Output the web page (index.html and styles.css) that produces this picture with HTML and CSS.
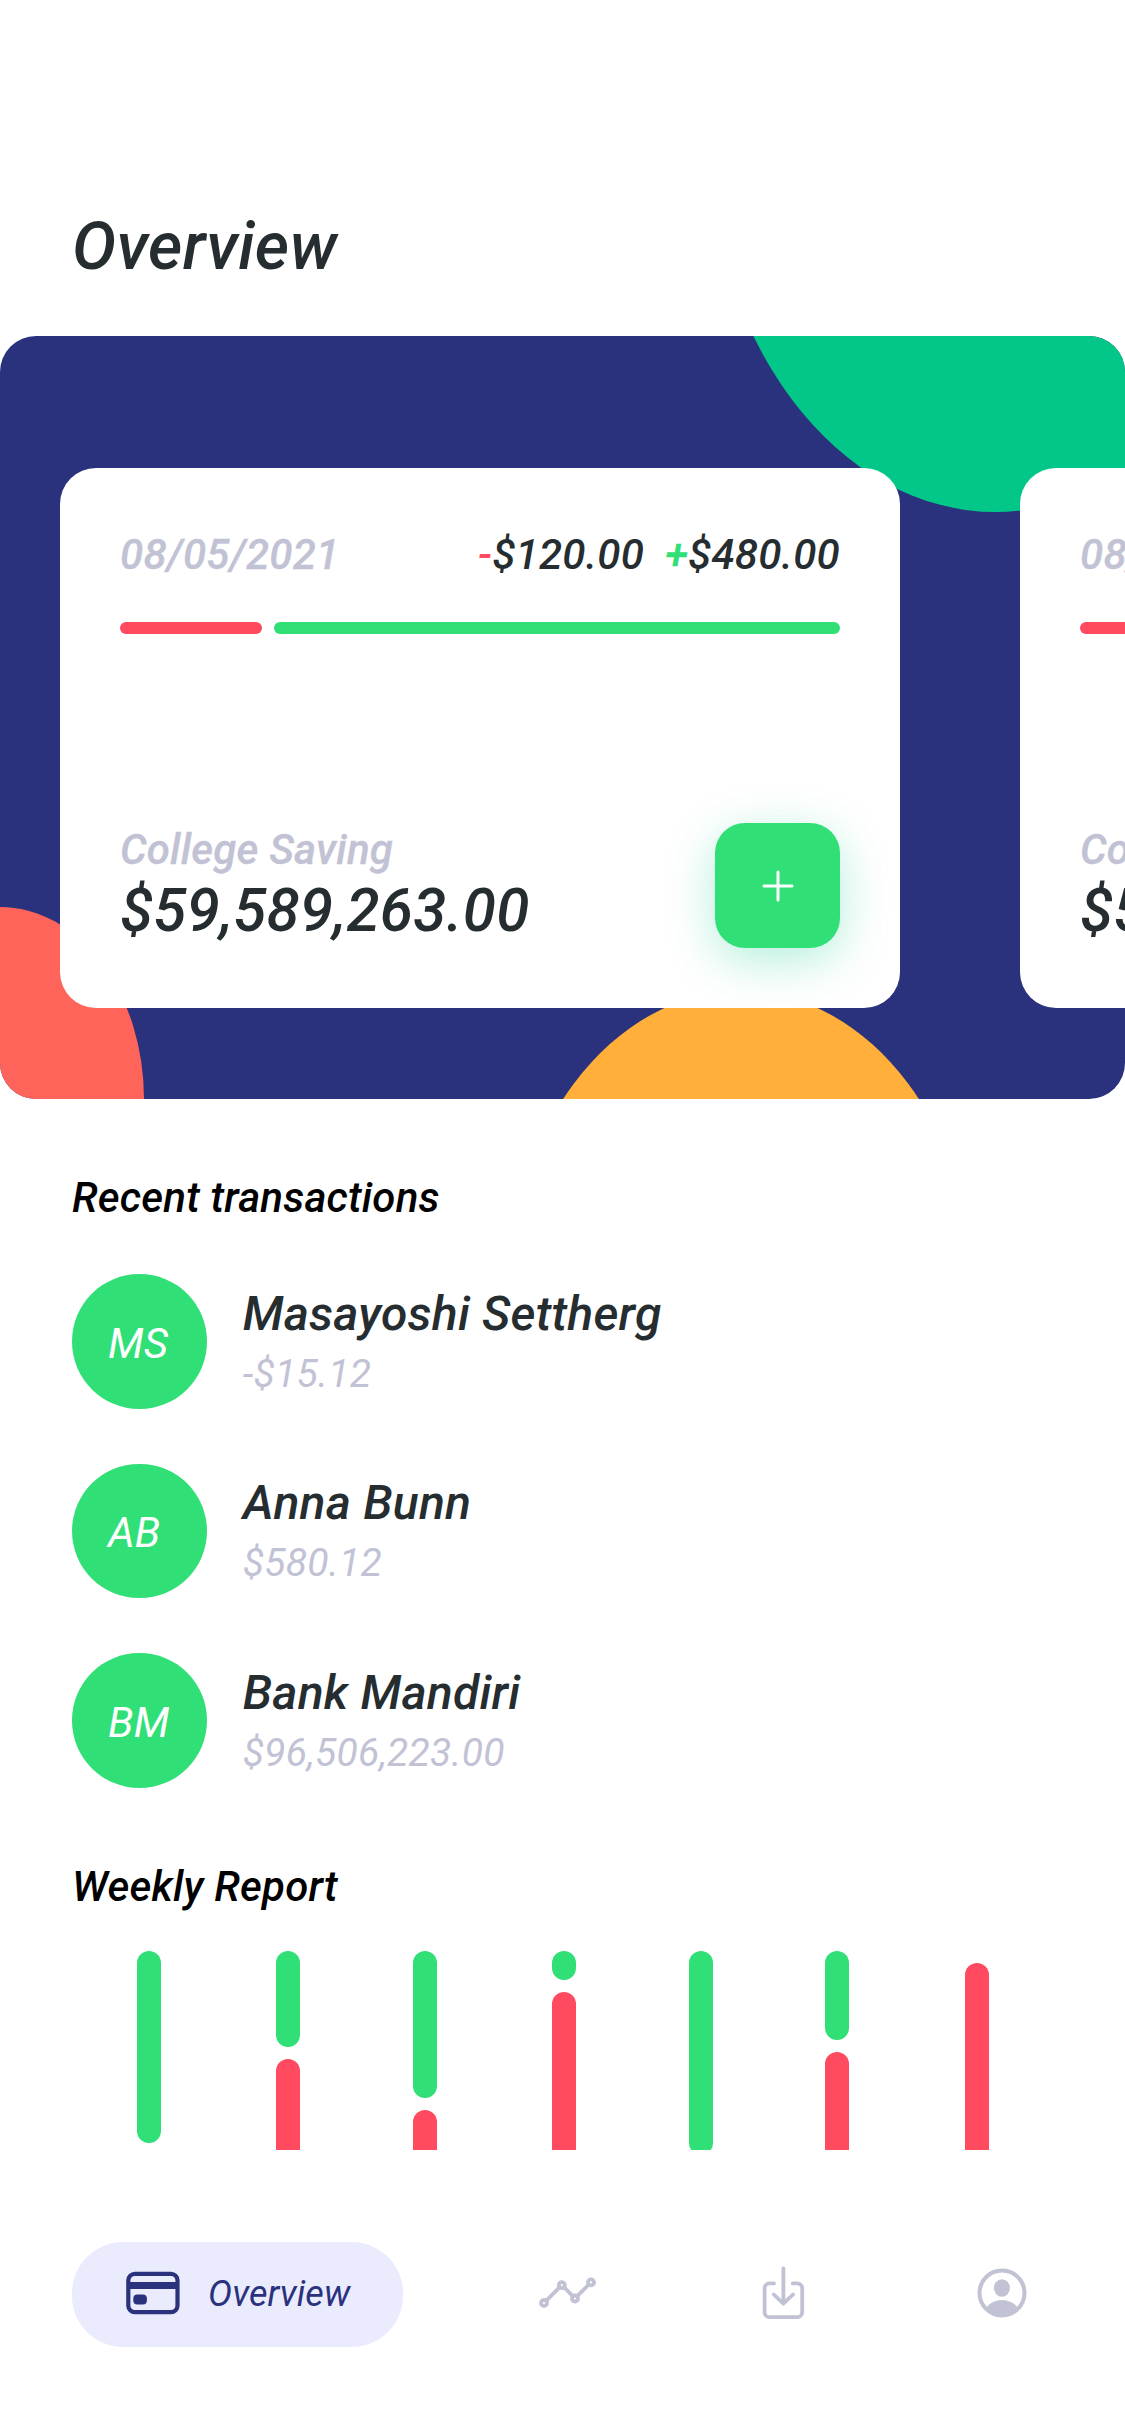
FILE: index.html
```html
<!DOCTYPE html>
<html lang="en">
<head>
<meta charset="utf-8">
<title>Overview</title>
<link rel="stylesheet" href="styles.css">
</head>
<body>
<div class="screen">
  <header class="header"><h1 class="title">Overview</h1></header>

  <section class="banner">
    <svg class="banner-art" viewBox="0 0 1125 763" aria-hidden="true">
      <ellipse cx="995.5" cy="-208" rx="288" ry="384" fill="#02c789"/>
      <ellipse cx="0" cy="763" rx="144" ry="192" fill="#ff645a"/>
      <ellipse cx="741" cy="970" rx="236" ry="315" fill="#ffaf3a"/>
    </svg>
    <div class="cards">
      <article class="card">
        <div class="card-top">
          <span class="muted label">08/05/2021</span>
          <span class="flows">
            <span class="flow"><span class="minus">-</span>$120.00</span>
            <span class="flow"><span class="plus">+</span>$480.00</span>
          </span>
        </div>
        <div class="ratio"><span class="ratio-out"></span><span class="ratio-in"></span></div>
        <div class="card-bottom">
          <div>
            <div class="muted label name">College Saving</div>
            <div class="balance">$59,589,263.00</div>
          </div>
          <button class="add" aria-label="Add">
            <svg width="34" height="34" viewBox="0 0 34 34"><path d="M17 3v28M3 17h28" stroke="#fff" stroke-width="3" stroke-linecap="round"/></svg>
          </button>
        </div>
      </article>
      <article class="card">
        <div class="card-top">
          <span class="muted label">08/05/2021</span>
          <span class="flows">
            <span class="flow"><span class="minus">-</span>$120.00</span>
            <span class="flow"><span class="plus">+</span>$480.00</span>
          </span>
        </div>
        <div class="ratio"><span class="ratio-out"></span><span class="ratio-in"></span></div>
        <div class="card-bottom">
          <div>
            <div class="muted label name">College Saving</div>
            <div class="balance">$59,589,263.00</div>
          </div>
          <button class="add" aria-label="Add">
            <svg width="34" height="34" viewBox="0 0 34 34"><path d="M17 3v28M3 17h28" stroke="#fff" stroke-width="3" stroke-linecap="round"/></svg>
          </button>
        </div>
      </article>
    </div>
  </section>

  <section class="section">
    <h2 class="section-title">Recent transactions</h2>
    <ul class="transactions">
      <li class="transaction">
        <div class="avatar">MS</div>
        <div class="details"><div class="person">Masayoshi Settherg</div><div class="sum">-$15.12</div></div>
      </li>
      <li class="transaction">
        <div class="avatar">AB</div>
        <div class="details"><div class="person">Anna Bunn</div><div class="sum">$580.12</div></div>
      </li>
      <li class="transaction">
        <div class="avatar">BM</div>
        <div class="details"><div class="person">Bank Mandiri</div><div class="sum">$96,506,223.00</div></div>
      </li>
    </ul>
  </section>

  <section class="section report">
    <h2 class="section-title">Weekly Report</h2>
    <div class="chart">
      <div class="day"><span class="in" style="height:192px"></span><span class="out"></span></div>
      <div class="day wide"><span class="in" style="height:96px"></span><span class="out"></span></div>
      <div class="day"><span class="in" style="height:146.6px"></span><span class="out"></span></div>
      <div class="day wide"><span class="in" style="height:29px"></span><span class="out"></span></div>
      <div class="day"><span class="in" style="height:203.7px"></span><span class="out"></span></div>
      <div class="day"><span class="in" style="height:89px"></span><span class="out"></span></div>
      <div class="day wide"><span class="in" style="height:0px"></span><span class="out"></span></div>
    </div>
  </section>

  <nav class="nav">
    <a class="tab active">
      <svg class="card-icon" width="54" height="44" viewBox="0 0 54 44" fill="none">
        <rect x="2.3" y="2.8" width="49.2" height="38.4" rx="6.5" stroke="#2a327d" stroke-width="4.2"/>
        <path d="M2 14.5h50" stroke="#2a327d" stroke-width="7.2"/>
        <rect x="7.3" y="23.6" width="13.6" height="9.8" rx="4" fill="#2a327d"/>
      </svg>
      <span class="tab-label">Overview</span>
    </a>
    <a class="tab icon stats" aria-label="Statistics">
      <svg width="60" height="56" viewBox="0 0 60 56" fill="none" stroke="#c1c2d4" stroke-width="3.8">
        <circle cx="7" cy="37" r="3"/><circle cx="24.8" cy="19.2" r="3"/><circle cx="38" cy="32.5" r="3"/><circle cx="54" cy="16.4" r="3"/>
        <path d="M9.2 34.8L22.6 21.2M27 21.2l8.8 9M40.2 30.2L51.8 18.5"/>
      </svg>
    </a>
    <a class="tab icon downloads" aria-label="Downloads">
      <svg width="60" height="56" viewBox="0 0 60 56" fill="none" stroke="#c1c2d4" stroke-width="3.8" stroke-linecap="round" stroke-linejoin="round">
        <path d="M21 17.4h-4.4a5 5 0 0 0-5 5v23.8a5 5 0 0 0 5 5h27.6a5 5 0 0 0 5-5V22.4a5 5 0 0 0-5-5h-4.4"/>
        <path d="M30.4 2.5v35M20.8 28.5l9.6 9.200 9.600-9.200"/>
      </svg>
    </a>
    <a class="tab icon" aria-label="Profile">
      <svg width="60" height="56" viewBox="0 0 60 56" fill="none">
        <circle cx="30" cy="27" r="22.5" stroke="#c1c2d4" stroke-width="4"/>
        <ellipse cx="29.9" cy="22" rx="8" ry="8.7" fill="#c1c2d4"/>
        <path d="M14.6 41.4C18 36.8 24 34 30 34s12 2.8 15.4 7.4C42 47.2 36 51.2 30 51.2s-12-4-15.4-9.8z" fill="#c1c2d4"/>
      </svg>
    </a>
  </nav>
</div>
</body>
</html>
```
FILE: styles.css
```css
* { box-sizing: border-box; }
body { margin: 0; background: #fff; font-family: Roboto, sans-serif; font-style: italic; letter-spacing: .25px; }
h1, h2, ul { margin: 0; padding: 0; list-style: none; }

.screen { width: 1125px; height: 2436px; overflow: hidden; display: flex; flex-direction: column; background: #fff; color: #262d30; }

.header { height: 336px; padding: 208px 72px 0; flex: none; }
.title { font-size: 66px; line-height: 78px; font-weight: 500; letter-spacing: .3px; }

.banner { position: relative; flex: none; height: 763.3px; padding: 132px 0 0 60px; background: #2a327d; border-radius: 36px; overflow: hidden; }
.banner-art { position: absolute; left: 0; top: 0; width: 1125px; height: 763px; display: block; }
.cards { position: relative; display: flex; gap: 120px; }
.card { flex: none; width: 840px; height: 540px; padding: 61px 60px 60px; border-radius: 36px; background: #fff; display: flex; flex-direction: column; }
.card-top { display: flex; justify-content: space-between; font-size: 42px; line-height: 52px; font-weight: 500; }
.label { font-size: 42px; font-weight: 500; -webkit-text-stroke: .3px #c1c2d4; }
.muted { color: #c1c2d4; }
.name { line-height: 50px; letter-spacing: .2px; }
.flows { display: flex; gap: 21px; }
.minus { color: #ff4a60; }
.plus { color: #31df77; -webkit-text-stroke: .3px #31df77; }
.ratio { display: flex; gap: 12px; margin-top: 40.5px; height: 12px; }
.ratio-out { flex: 1; border-radius: 6px; background: #ff4a60; }
.ratio-in { flex: 4; border-radius: 6px; background: #31df77; }
.card-bottom { margin-top: auto; display: flex; justify-content: space-between; align-items: center; }
.balance { font-size: 60px; line-height: 71px; font-weight: 500; }
.add { width: 125px; height: 125px; padding: 0; border: 0; border-radius: 30px; background: #31df77; display: flex; align-items: center; justify-content: center; box-shadow: 0 12px 48px rgba(2, 199, 137, .3); }

.section { flex: none; padding: 73.5px 72px 0; }
.section-title { font-size: 42px; line-height: 50px; font-weight: 500; color: #000; letter-spacing: .2px; }
.transactions { margin-top: 51.5px; display: flex; flex-direction: column; gap: 54.8px; }
.transaction { display: flex; align-items: center; gap: 36px; height: 134.7px; }
.avatar { flex: none; width: 134.7px; height: 134.7px; padding: 3px 0 0 36px; border-radius: 50%; background: #31df77; color: #fff; font-size: 42px; display: flex; align-items: center; }
.details { padding-top: 4.6px; }
.person { font-size: 48px; line-height: 60px; font-weight: 500; }
.sum { font-size: 39px; line-height: 60px; color: #c1c2d4; }

.report { padding-top: 73.9px; }
.chart { margin-top: 39.1px; height: 199.3px; padding-left: 64.8px; overflow: hidden; display: flex; gap: 112.7px; }
.day { flex: none; width: 24px; display: flex; flex-direction: column; gap: 12px; }
.wide { margin-left: 2.6px; }
.in { flex: none; border-radius: 12px; background: #31df77; }
.out { flex: none; height: 240px; border-radius: 12px; background: #ff4a60; }

.nav { flex: none; margin-top: 91.5px; padding: 0 93px 0 72px; height: 105.5px; display: flex; align-items: center; justify-content: space-between; }
.tab { display: flex; align-items: center; }
.tab svg { display: block; }
.icon { padding-bottom: 1px; }
.stats { margin-left: -23px; }
.downloads { margin: 0 1.5px 0 -1.5px; }
.active { width: 331px; height: 105.5px; padding-left: 54px; gap: 28px; border-radius: 51px; background: #eaebfd; }
.card-icon { margin-bottom: 3px; }
.tab-label { font-size: 36px; line-height: 44px; color: #2a327d; letter-spacing: .1px; }
```
